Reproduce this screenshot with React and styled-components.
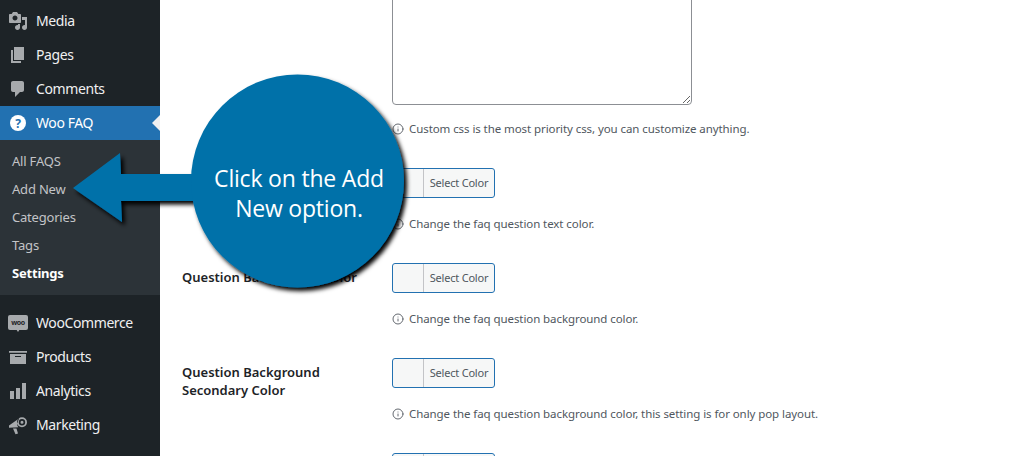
import React from 'react';
import styled, { createGlobalStyle } from 'styled-components';
import { Info } from 'lucide-react';

const GlobalStyle = createGlobalStyle`
  html, body {
    margin: 0;
    padding: 0;
    background: #fff;
    overflow: hidden;
  }
  body {
    font-family: "Noto Sans", "Open Sans", "Liberation Sans", sans-serif;
  }
`;

const Page = styled.div`
  position: relative;
  display: flex;
  width: 1024px;
  height: 456px;
  overflow: hidden;
`;

const Sidebar = styled.nav`
  width: 160px;
  flex-shrink: 0;
  padding-top: 4px;
  background: #1d2327;
`;

const MenuItem = styled.div`
  position: relative;
  display: flex;
  align-items: center;
  height: 34px;
  padding-left: 8px;
  font-size: 14px;
  letter-spacing: -0.4px;
  color: ${props => (props.$active ? '#fff' : '#f0f0f1')};
  background: ${props => (props.$active ? '#2271b1' : 'transparent')};
  &::after {
    content: '';
    display: ${props => (props.$active ? 'block' : 'none')};
    position: absolute;
    right: 0;
    top: 9px;
    border: 8px solid transparent;
    border-right-color: #f0f0f1;
  }
`;

const MenuLabel = styled.span`
  padding-bottom: 2px;
`;

const MenuIcon = styled.svg`
  width: 20px;
  height: 20px;
  margin-right: 8px;
  flex-shrink: 0;
  fill: ${props => (props.$active ? '#fff' : '#a7aaad')};
`;

const SubMenu = styled.div`
  padding: 7px 0 8px;
  margin-bottom: 11px;
  background: #2c3338;
`;

const SubItem = styled.div`
  height: 28px;
  line-height: 28px;
  padding-left: 12px;
  font-size: 13px;
  letter-spacing: -0.2px;
  font-weight: ${props => (props.$current ? 700 : 400)};
  color: ${props => (props.$current ? '#fff' : '#c3c4c7')};
`;

const Main = styled.main`
  flex: 1;
  padding-left: 22px;
  margin-top: -45px;
`;

const Row = styled.section`
  display: grid;
  grid-template-columns: 210px 300px;
  margin-bottom: 30px;
`;

const Label = styled.label`
  padding-top: 5px;
  width: 178px;
  font-size: 13px;
  font-weight: 600;
  line-height: 18px;
  color: #1d2327;
`;

const Field = styled.div`
  min-width: 0;
`;

const CssBox = styled.textarea`
  display: block;
  box-sizing: border-box;
  width: 300px;
  height: 150px;
  background: #fff;
  border: 1px solid #8c8f94;
  border-radius: 4px;
  outline: none;
`;

const ColorButton = styled.div`
  display: flex;
  box-sizing: border-box;
  width: 103px;
  height: 30px;
  overflow: hidden;
  background: #f6f7f7;
  border: 1px solid #2271b1;
  border-radius: 3px;
`;

const Swatch = styled.span`
  width: 30px;
  border-right: 1px solid #c3c4c7;
`;

const ButtonText = styled.span`
  flex: 1;
  text-align: center;
  font-size: 11px;
  letter-spacing: -0.2px;
  line-height: 28px;
  color: #50575e;
`;

const Hint = styled.p`
  display: flex;
  align-items: center;
  gap: 5px;
  margin: ${props => props.$gap}px 0 0;
  height: 18px;
  font-size: 11.5px;
  letter-spacing: -0.08px;
  line-height: 18px;
  white-space: nowrap;
  color: #50575e;
`;

const HintIcon = styled(Info)`
  flex-shrink: 0;
  width: 12px;
  height: 12px;
  color: #646970;
`;

const Callout = styled.div`
  position: absolute;
  left: 60px;
  top: 60px;
  width: 360px;
  height: 240px;
`;

const CalloutShape = styled.svg`
  display: block;
  width: 100%;
  height: 100%;
`;

const CalloutText = styled.div`
  position: absolute;
  left: 134px;
  top: 103px;
  width: 210px;
  text-align: center;
  font-family: "Open Sans", "Noto Sans", sans-serif;
  font-size: 23px;
  line-height: 30px;
  letter-spacing: -0.2px;
  color: #fff;
`;

const menuTop = [
  { name: 'Media', d: 'M13 11V4c0-.55-.45-1-1-1h-1.67L9 1H5L3.67 3H2c-.55 0-1 .45-1 1v7c0 .55.45 1 1 1h10c.55 0 1-.45 1-1zM7 4.500c1.380 0 2.500 1.120 2.500 2.500S8.380 9.500 7 9.500 4.500 8.380 4.500 7 5.620 4.500 7 4.500zM14 6h5v10.500c0 1.380-1.120 2.500-2.500 2.500S14 17.880 14 16.500s1.120-2.500 2.500-2.500c.17 0 .34.020.5.050V9h-3V6zm-4 8.050V13h2v3.500c0 1.380-1.120 2.500-2.500 2.500S7 17.880 7 16.500 8.120 14 9.500 14c.17 0 .34.020.5.050z' },
  { name: 'Pages', d: 'M6 15V2h10v13H6zm-1 1h8v2H3V5h2v11z' },
  { name: 'Comments', d: 'M5 2h9c1.100 0 2 .9 2 2v7c0 1.100-.9 2-2 2h-2l-5 5v-5H5c-1.100 0-2-.9-2-2V4c0-1.100.9-2 2-2z' },
];

const menuBottom = [
  { name: 'Products', d: 'M19 4v1.700H1V4h18zM2 7h16v10H2V7zm11 3V9H7v1h6z' },
  { name: 'Analytics', d: 'M18 18V2h-4v16h4zm-6 0V7H8v11h4zm-6 0v-8H2v8h4z' },
  {
    name: 'Marketing',
    d: 'M1 10.500 11 3.500 9.800 7a4.500 4.500 0 0 0 .6 5.200l-9.400.5zM14 2.200a5 5 0 1 1 0 10 5 5 0 0 1 0-10zm0 1.800a3.200 3.200 0 1 0 0 6.400 3.200 3.200 0 0 0 0-6.400zm0 1.700a1.500 1.500 0 1 1 0 3 1.500 1.500 0 0 1 0-3zM5 13.500h3.500l1.500 5-2.500.8z',
  },
];

const subItems = ['All FAQS', 'Add New', 'Categories', 'Tags', 'Settings'];

const rows = [
  { label: 'Question Text Color', hint: 'Change the faq question text color.' },
  { label: 'Question Background Color', hint: 'Change the faq question background color.' },
  {
    label: 'Question Background Secondary Color',
    hint: 'Change the faq question background color, this setting is for only pop layout.',
  },
  { label: 'Answer Text Color', hint: 'Change the faq answer text color.' },
];

const Icon = ({ d }) => (
  <MenuIcon viewBox="0 0 20 20">
    <path d={d} fillRule="evenodd" />
  </MenuIcon>
);

const App = () => (
  <Page>
    <GlobalStyle />
    <Sidebar>
      {menuTop.map(item => (
        <MenuItem key={item.name}>
          <Icon d={item.d} />
          <MenuLabel>{item.name}</MenuLabel>
        </MenuItem>
      ))}
      <MenuItem $active>
        <MenuIcon viewBox="0 0 20 20" $active>
          <circle cx="10" cy="10" r="8" />
          <text x="10" y="14.500" textAnchor="middle" fontSize="12" fontWeight="700" fill="#2271b1">?</text>
        </MenuIcon>
        <MenuLabel>Woo FAQ</MenuLabel>
      </MenuItem>
      <SubMenu>
        {subItems.map(name => (
          <SubItem key={name} $current={name === 'Settings'}>{name}</SubItem>
        ))}
      </SubMenu>
      <MenuItem>
        <MenuIcon viewBox="0 0 20 20">
          <rect x="0" y="2" width="20" height="15" rx="2" />
          <path d="M8 16h4l-2 3z" />
          <text x="10" y="12" textAnchor="middle" fontSize="7" fontWeight="700" fill="#1d2327">woo</text>
        </MenuIcon>
        <MenuLabel>WooCommerce</MenuLabel>
      </MenuItem>
      {menuBottom.map(item => (
        <MenuItem key={item.name}>
          <Icon d={item.d} />
          <MenuLabel>{item.name}</MenuLabel>
        </MenuItem>
      ))}
    </Sidebar>
    <Main>
      <Row>
        <Label />
        <Field>
          <CssBox readOnly />
          <Hint $gap={15}>
            <HintIcon />
            Custom css is the most priority css, you can customize anything.
          </Hint>
        </Field>
      </Row>
      {rows.map(row => (
        <Row key={row.label}>
          <Label>{row.label}</Label>
          <Field>
            <ColorButton>
              <Swatch />
              <ButtonText>Select Color</ButtonText>
            </ColorButton>
            <Hint $gap={17}>
              <HintIcon />
              {row.hint}
            </Hint>
          </Field>
        </Row>
      ))}
    </Main>
    <Callout>
      <CalloutShape viewBox="60 60 360 240">
        <defs>
          <filter id="callout-shadow" x="-10%" y="-10%" width="120%" height="120%">
            <feDropShadow dx="3" dy="3.500" stdDeviation="2.200" floodColor="#000" floodOpacity="1" />
          </filter>
        </defs>
        <g filter="url(#callout-shadow)" fill="#0071a9">
          <path d="M73 188 120 153 121 174 200 174 200 201 121 201 122 222Z" />
          <circle cx="297.500" cy="181" r="106.500" />
        </g>
      </CalloutShape>
      <CalloutText>Click on the Add New option.</CalloutText>
    </Callout>
  </Page>
);

export default App;
